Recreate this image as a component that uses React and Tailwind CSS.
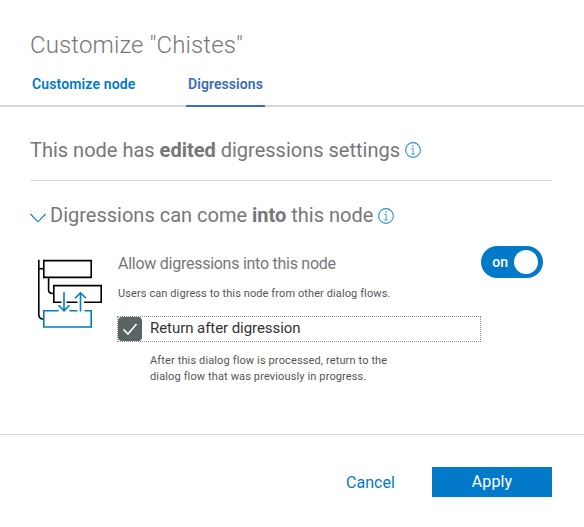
import React from "react";

function InfoIcon() {
  return (
    <svg className="h-4 w-4 shrink-0" viewBox="0 0 16 16" fill="none" stroke="#2f8fd3">
      <circle cx="8" cy="8" r="7.4" strokeWidth="1.1" />
      <path d="M6.6 6.5H8.1V12M6.3 12H9.8" strokeWidth="0.9" />
      <path d="M7.3 4.2H8.7" strokeWidth="1.2" />
    </svg>
  );
}

function Tabs() {
  return (
    <nav className="flex h-[42px] gap-[48px] border-b-2 border-[#d8d8d8] pl-[30px] text-[14px] leading-[20px] font-semibold">
      <button className="h-[42px] w-[108px] shrink-0 pb-[4px] pl-[2px] text-left text-[#0279c9]">
        <span className="tracking-[0.13px] whitespace-nowrap">Customize node</span>
      </button>
      <button className="h-[42px] w-[79px] shrink-0 border-b-2 border-[#3a6db8] pb-[2px] pl-[2px] text-left text-[#3a6db8]">
        <span className="tracking-[0.08px] whitespace-nowrap">Digressions</span>
      </button>
    </nav>
  );
}

function DigressionDiagram() {
  return (
    <svg className="mt-[6px] h-[72px] w-[72px] shrink-0" viewBox="0 0 72 72" fill="none" strokeWidth="1.6">
      <g stroke="#000">
        <path d="M8.8 1.7V56Q8.8 61 13 61" />
        <path d="M9 10.7H14" />
        <path d="M13.8 2.6H61.2V19.4H13.8Z" />
        <path d="M18.6 19.5V32Q18.6 35.5 23 35.5H24" />
        <path d="M31.5 44.2H23.8V27.6H71.2V44.2H54M36.5 44.2H47.5" />
      </g>
      <g stroke="#0279c9">
        <path d="M28.5 52.8H13.8V69H61.2V52.8H54.5M39.5 52.8H47.5" />
        <path d="M34 34.3V52.8M28.5 47.3L34 52.8L39.5 47.3" />
        <path d="M50.5 53.5V34.8M45 40.3L50.5 34.8L56 40.3" />
      </g>
    </svg>
  );
}

export default function App() {
  return (
    <main className="flex h-[527px] w-[584px] flex-col bg-white font-[Roboto,sans-serif] text-[#777]">
      <h1 className="h-[65px] pt-[30px] pl-[30px] text-[24px] leading-[30px] font-light">
        <span className="tracking-[0.12px]">Customize "Chistes"</span>
      </h1>
      <Tabs />
      <section className="mx-[30px] mr-[32px] flex h-[74px] items-center border-b border-[#d8d8d8] pt-[13px] text-[20px]">
        <h2 className="mr-[5px] whitespace-nowrap">
          This node has <b>edited</b> digressions settings
        </h2>
        <InfoIcon />
      </section>
      <section className="flex h-[254px] flex-col border-b border-[#d8d8d8]">
        <div className="flex h-[68px] items-center pl-[30px] text-[20px]">
          <svg className="mt-[5px] mr-[4px] h-4 w-4 shrink-0" viewBox="0 0 16 16" fill="none" stroke="#0279c9">
            <path d="M.4 4L8 11.8L15.6 4" strokeWidth="1.1" />
          </svg>
          <h2 className="mr-[5px] whitespace-nowrap">
            Digressions can come <b>into</b> this node
          </h2>
          <span className="mt-[2px]">
            <InfoIcon />
          </span>
        </div>
        <div className="flex pt-[3px] pl-[30px]">
          <DigressionDiagram />
          <div className="ml-[15px] w-[364px]">
            <h3 className="pl-[1px] text-[16px] leading-[24px] tracking-[-0.26px] whitespace-nowrap">
              Allow digressions into this node
            </h3>
            <p className="mt-[10px] pl-[1px] text-[11px] leading-[16px] tracking-[0.1px] whitespace-nowrap text-[#555]">
              Users can digress to this node from other dialog flows.
            </p>
            <label className="mt-[14px] flex h-[26px] items-center border border-dotted border-[#8c8c8c] text-[#333]">
              <span className="flex h-6 w-6 shrink-0 items-center justify-center rounded-[4px] bg-[#5a6464]">
                <svg className="h-4 w-4" viewBox="0 0 16 16" fill="none" stroke="#fff" strokeWidth="1.7">
                  <path d="M1.5 8.5L6 13L14.5 3" />
                </svg>
              </span>
              <span className="mb-[2px] ml-[8px] text-[15px] leading-[22px] tracking-[-0.06px] whitespace-nowrap">
                Return after digression
              </span>
            </label>
            <p className="mt-[11px] ml-[33px] text-[11px] leading-[16px] tracking-[0.13px] whitespace-nowrap text-[#555]">
              After this dialog flow is processed, return to the
              <br />
              dialog flow that was previously in progress.
            </p>
          </div>
          <div className="mt-[-6px] flex h-8 w-[62px] shrink-0 items-center justify-end rounded-full bg-[#0279c9] pr-[5px] text-[14px] font-medium text-white">
            <span className="mr-[6px]">on</span>
            <span className="h-6 w-6 rounded-full bg-white" />
          </div>
        </div>
      </section>
      <footer className="flex justify-end pt-[32px] pr-[32px] text-[16px]">
        <button className="mr-[37px] h-[30px] pt-[1px] tracking-[0.04px] text-[#0279c9]">Cancel</button>
        <button className="h-[30px] w-[120px] bg-[#0279c9] pb-[1px] tracking-[0.1px] text-white">Apply</button>
      </footer>
    </main>
  );
}
